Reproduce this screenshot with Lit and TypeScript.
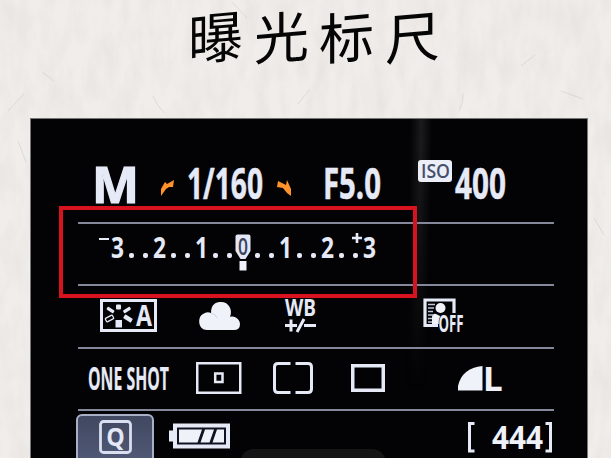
import { LitElement, html, css } from "lit";
import { customElement } from "lit/decorators.js";

const FONT = "'Open Sans', 'Noto Sans', sans-serif";

/** A condensed caption: the glyphs are squeezed to the given width. */
const caption = (text: string, w: number, h: number, weight = 600, bold = 0) => html`
  <svg class="caption" width=${w} height=${h} viewBox="0 0 ${w} ${h}">
    <text x="0" y=${h - 0.5} font-family=${FONT} font-weight=${weight} stroke="currentColor" stroke-width=${bold}
      font-size=${(h - 0.5) / 0.72} textLength=${w} lengthAdjust="spacingAndGlyphs">${text}</text>
  </svg>`;

@customElement("exposure-scale")
export class ExposureScale extends LitElement {
  static styles = css`
    :host { display: grid; grid-template-columns: repeat(19, 14.05px); height: 38px; color: #e6e9f6; }
    .tick { position: relative; display: flex; justify-content: center; align-items: flex-start; padding-top: 5px; }
    .caption { display: block; overflow: visible; fill: currentColor; }
    .dot { width: 5px; height: 5px; border-radius: 2px; background: currentColor; margin-top: 15.5px; }
    .sign { position: absolute; left: -11px; top: 5.5px; width: 10px; height: 2.4px; background: currentColor; }
    .plus { position: absolute; left: -11px; top: 1px; }
    .zero { margin-top: -3px; flex: none; }
  `;
  render() {
    return html`${[..."3..2..1..0..1..2..3"].map((c, i) => {
      if (c === ".") return html`<div class="tick"><i class="dot"></i></div>`;
      if (c === "0")
        return html`<div class="tick"><svg class="zero" width="16" height="37" viewBox="0 0 16 37">
          <path d="M2.5 .5H13.5Q15.5.5 15.5 2.5V17L10.5 25H5.5L.5 17V2.5Q.5.5 2.5 .5Z" fill="#e3e7f6"/>
          <text x="3" y="20.6" font-family=${FONT} font-size="24" font-weight="600" fill="#3c435a"
            textLength="10" lengthAdjust="spacingAndGlyphs">0</text>
          <rect x="4.5" y="27" width="7" height="9.5" fill="#f0f2fb"/></svg></div>`;
      return html`<div class="tick">
        ${i === 0 ? html`<i class="sign"></i>` : ""}
        ${i === 18 ? html`<svg class="plus" width="10" height="10" viewBox="0 0 10 10">
          <path d="M5 0V10M0 5H10" stroke="currentColor" stroke-width="2.6"/></svg>` : ""}
        ${caption(c, 13, 21, 700)}
      </div>`;
    })}`;
  }
}

@customElement("app-root")
export class AppRoot extends LitElement {
  static styles = css`
    :host { display: block; position: relative; width: 611px; height: 458px; overflow: hidden; background: #ece9e6; }
    .paper { position: absolute; inset: 0; }
    .page { position: relative; display: flex; flex-direction: column; height: 458px; }
    .title { display: flex; height: 118px; margin: 0; padding: 0 0 0 188px; gap: 9.5px; box-sizing: border-box;
      font: 400 55px/68px "Noto Sans CJK SC", sans-serif; color: #050505; }
    .title span { width: 56px; transform: skewY(-5deg); }
    .panel { position: relative; width: 558px; height: 340px; margin-left: 30px; box-sizing: border-box;
      border: solid #77777a; border-width: 1px 1px 0 1px; padding: 0 33px 0 47px; color: #e6e9f6; overflow: hidden;
      background: #030305; }
    .glare { position: absolute; left: 368px; top: 0; width: 40px; height: 270px;
      background: linear-gradient(91deg, transparent 25%, #1b1b1d 50%, transparent 75%);
      mask-image: linear-gradient(#000 10%, transparent); }
    .row { position: relative; display: flex; height: 62.3px; box-sizing: border-box; border-bottom: 2px solid #85879a; align-items: flex-start; }
    .row svg { display: block; flex: none; overflow: visible; }
    .caption { fill: currentColor; }
    .exposure { height: 105px; }
    .quick { border: 0; height: 60px; }
    .iso { width: 34px; height: 22px; border-radius: 3px; background: #eceff8; color: #46506a;
      display: flex; justify-content: center; align-items: center; margin: 40.5px 3px 0 37px; }
    .frame { position: absolute; left: 59px; top: 205.5px; width: 358px; height: 92px; box-sizing: border-box; border: 4px solid #d9121f; }
    .q { width: 78px; height: 52px; box-sizing: border-box; margin: 3px 14px 0 -2px; border: 2px solid #a9afc6; border-radius: 6px;
      background: linear-gradient(#414861, #515a77); display: flex; justify-content: center; padding-top: 4px; }
    .pill { position: absolute; left: 209px; bottom: -24px; width: 146px; height: 33px; border-radius: 14px; background: #151516; }
    .m1 { margin: 46.5px 0 0 14px; } .m2 { margin: 61px 0 0 22px; } .m3 { margin: 49px 0 0 13px; }
    .m4 { margin: 61px 0 0 14px; } .m5 { margin: 49px 0 0 32px; } .m6 { margin-top: 49px; }
    .scale { margin: 8px 0 0 32px; }
    .p1 { margin: 13px 0 0 22px; } .p2 { margin: 16px 0 0 42px; } .p3 { margin: 13px 0 0 45px; } .p4 { margin: 12px 0 0 107px; }
    .s1 { margin: 17px 0 0 10px; } .s2 { margin: 13px 0 0 27px; } .s3 { margin: 13px 0 0 31px; }
    .s4 { margin: 15px 0 0 38px; } .s5 { margin: 17px 0 0 73px; }
    .b1 { margin: 12px 0 0 1px; } .b2 { margin: 11px 0 0 237px; }
  `;

  render() {
    return html`
      <svg class="paper" width="611" height="458">
        <filter id="grain" x="0" y="0" width="100%" height="100%">
          <feTurbulence type="fractalNoise" baseFrequency="0.07 0.025" numOctaves="4" seed="8"/>
          <feColorMatrix values="0 0 0 0 .72  0 0 0 0 .67  0 0 0 0 .62  .9 0 0 0 -.3"/>
        </filter>
        <rect width="611" height="458" fill="#f0edeb"/>
        <rect width="611" height="458" filter="url(#grain)" opacity=".7"/>
        <g fill="none" stroke="#b8b0a6" stroke-width=".7" opacity=".45">
          <path d="M153 96q5 12 12 17M232 2l15 16M8 111l16-17M521 66l14-11M459 111q5-8 4-18M42 72l12 9M594 218l10 17M18 141l8 21M561 91l22 8M310 89l-12 15"/>
        </g>
      </svg>
      <div class="page">
        <h1 class="title">${[..."曝光标尺"].map((c) => html`<span>${c}</span>`)}</h1>
        <div class="panel">
          <div class="glare"></div>
          <div class="row exposure">
            <div class="m1">${caption("M", 47, 37, 700, 1.2)}</div>
            <svg class="m2" width="13" height="16" viewBox="0 0 13 16"><path d="M0 16 0 9 4 2 6 4 13 0 12 7 8 7 5 9Z" fill="#ff922b"/></svg>
            <div class="m3">${caption("1/160", 76, 31.5, 700, 0.5)}</div>
            <svg class="m4" width="14" height="16" viewBox="0 0 14 16"><path d="M14 16 14 9 10 0 9 5 1 1 0 7 6 8 10 13Z" fill="#ff922b"/></svg>
            <div class="m5">${caption("F5.0", 58, 31.5, 700, 0.5)}</div>
            <div class="iso">${caption("ISO", 29, 15, 600, 0)}</div>
            <div class="m6">${caption("400", 51, 31.5, 700, 0.5)}</div>
          </div>
          <div class="row"><exposure-scale class="scale"></exposure-scale></div>
          <div class="row">
            <svg class="p1" width="57" height="33" viewBox="0 0 57 33">
              <rect x="1.5" y="1.5" width="54" height="30" fill="none" stroke="#e6e9f6" stroke-width="3"/>
              <g fill="#e6e9f6">
                <rect x="16" y="5.5" width="5" height="5" rx="1"/><rect x="15.5" y="21" width="6.5" height="7.5"/>
                <rect x="-4" y="-1.7" width="8" height="3.4" rx="1" transform="translate(10.5 11) rotate(32)"/>
                <rect x="-4" y="-1.7" width="8" height="3.4" rx="1" transform="translate(27 11) rotate(-32)"/>
                <rect x="-4.5" y="-2.2" width="9" height="4.4" rx="1" transform="translate(28 19.5) rotate(32)"/>
                <rect x="-4" y="-2" width="8" height="4" rx="1" fill="none" stroke="#e6e9f6" stroke-width="1.3" transform="translate(9.5 19.5) rotate(-28)"/>
              </g>
              <text x="36" y="27" font-family=${FONT} font-weight="700" font-size="28" fill="#e6e9f6" textLength="16" lengthAdjust="spacingAndGlyphs">A</text>
            </svg>
            <svg class="p2" width="41" height="28" viewBox="0 0 41 28"><path d="M8 28C-1 28-2 15 4 12Q8 9 12 11C12 2 17 0 22 0C30 0 34 8 31 15C36 13 41 18 41 22Q41 28 35 28Z" fill="#f0f2fa"/><path d="M12 11Q17 12 18 16" fill="none" stroke="#c9ccda" stroke-width=".8"/></svg>
            <svg class="p3" width="31" height="33" viewBox="0 0 31 33">
              <text x="0" y="17" font-family=${FONT} font-weight="700" font-size="24" fill="#e6e9f6" textLength="31" lengthAdjust="spacingAndGlyphs">WB</text>
              <path d="M0 26.5H12M6 20.5V32.5M12 33L19 20M19 26.5H31" stroke="#e6e9f6" stroke-width="3"/>
            </svg>
            <svg class="p4" width="40" height="35" viewBox="0 0 40 35">
              <path d="M15 27.5H2V2H31V15" fill="none" stroke="#e6e9f6" stroke-width="3.2"/>
              <path d="M5 6.5H12M5 10H11M5 13.5H10M5 17H10M5 20.5H9M5 24H9" stroke="#bfc5da" stroke-width="1.7"/>
              <circle cx="17.5" cy="10" r="5" fill="#f0f2fa"/><path d="M9 26V19Q10 15 13 16L17 18V26Z" fill="#f0f2fa"/>
              <text x="15.5" y="34" font-family=${FONT} font-weight="700" font-size="23.5" fill="#e6e9f6" stroke="#050507" stroke-width="2" paint-order="stroke" textLength="25" lengthAdjust="spacingAndGlyphs">OFF</text>
            </svg>
          </div>
          <div class="row">
            <div class="s1">${caption("ONE SHOT", 81, 24, 700, 0.2)}</div>
            <svg class="s2" width="46" height="32" viewBox="0 0 46 32" fill="none" stroke="#e6e9f6"><rect x="1.25" y="1.25" width="43" height="29.5" stroke-width="2.5"/><rect x="19.2" y="11.5" width="7.3" height="8.5" stroke-width="2.5"/></svg>
            <svg class="s3" width="40" height="32" viewBox="0 0 40 32"><path d="M17.5 1.5H5Q1.5 1.5 1.5 5V27Q1.5 30.5 5 30.5H17.5M22.5 1.5H35Q38.5 1.5 38.5 5V27Q38.5 30.5 35 30.5H22.5" fill="none" stroke="#e6e9f6" stroke-width="3"/></svg>
            <svg class="s4" width="34" height="28" viewBox="0 0 34 28"><rect x="1.75" y="1.75" width="30.5" height="24.5" fill="none" stroke="#e6e9f6" stroke-width="3.5"/></svg>
            <svg class="s5" width="45" height="25" viewBox="0 0 45 25"><path d="M0 24.5V20Q4 2 24.5 0V24.5Z" fill="#f0f2fa"/>
              <text x="24.8" y="24.5" font-family=${FONT} font-weight="700" font-size="34" fill="#f0f2fa" textLength="20" lengthAdjust="spacingAndGlyphs">L</text></svg>
          </div>
          <div class="row quick">
            <div class="q"><svg width="33" height="34" viewBox="0 0 33 34"><rect x="1.5" y="1.5" width="30" height="31" rx="3" fill="none" stroke="#d9def0" stroke-width="2.8"/>
              <text x="7.2" y="25.5" font-family=${FONT} font-weight="700" font-size="25" fill="#e3e7f6" textLength="18.5" lengthAdjust="spacingAndGlyphs">Q</text></svg></div>
            <svg class="b1" width="61" height="26" viewBox="0 0 61 26"><path d="M0 7.5H4V.5H61V25.5H4V18.5H0Z" fill="#e6e9f6"/><rect x="8" y="4.5" width="49" height="17" fill="#101322"/>
              <path d="M10 6.5H33L28.5 19.5H10ZM36 6.5H45L40.5 19.5H31.5ZM48 6.5H55V19.5H43.5Z" fill="#f0f2fa"/></svg>
            <svg class="b2" width="86" height="31" viewBox="0 0 86 31"><path d="M7.5 1.5H2.5V29H7.5M78.5 1.5H83.5V29H78.5" fill="none" stroke="#e6e9f6" stroke-width="3"/>
              <text x="25" y="27" font-family=${FONT} font-weight="700" font-size="32.5" fill="#f0f2fa" textLength="51" lengthAdjust="spacingAndGlyphs">444</text></svg>
          </div>
          <div class="pill"></div>
        </div>
      </div>
      <div class="frame"></div>`;
  }
}
